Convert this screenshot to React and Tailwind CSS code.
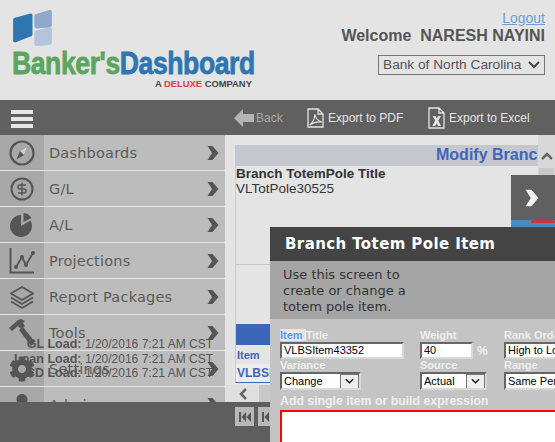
import React from 'react';
import { FaCog, FaUser } from 'react-icons/fa';

const Chevron = ({ className = 'w-[12px] h-[14px] text-[#555]' }) => (
  <svg viewBox="0 0 12 14" className={className}>
    <path d="M0.500 0h5l6 7-6 7h-5l4.500-7z" fill="currentColor" />
  </svg>
);

const CompassIcon = () => (
  <svg viewBox="0 0 26 26" className="w-[26px] h-[26px] text-[#555]">
    <circle cx="13" cy="13" r="11.500" fill="none" stroke="currentColor" strokeWidth="2.200" />
    <path d="M18.500 6.500L15 15l-7.500 4.500L11 11z" fill="currentColor" />
    <path d="M18.500 6.500L11 11l4 4z" fill="#d0d0d0" />
  </svg>
);

const DollarIcon = () => (
  <svg viewBox="0 0 24 24" className="w-[24px] h-[24px] text-[#555]">
    <circle cx="12" cy="12" r="10.500" fill="none" stroke="currentColor" strokeWidth="2" />
    <path d="M16 8H10a2 2 0 0 0 0 4h4a2 2 0 0 1 0 4H8M12 5.500v13" fill="none" stroke="currentColor" strokeWidth="1.500" />
  </svg>
);

const PieIcon = () => (
  <svg viewBox="0 0 24 24" className="w-[24px] h-[24px] text-[#555]">
    <path d="M11 13L20.500 7.500A11 11 0 1 1 11 2z" fill="currentColor" />
    <path d="M13.500 9V0A10 10 0 0 1 21.500 5z" fill="currentColor" />
  </svg>
);

const ChartIcon = () => (
  <svg viewBox="0 0 26 26" className="w-[26px] h-[26px] text-[#555]">
    <path d="M1.500 0v24.500H25" fill="none" stroke="currentColor" strokeWidth="2" />
    <path d="M7 19l6-10 4 8 7-12" fill="none" stroke="currentColor" strokeWidth="1.800" />
    <circle cx="7" cy="19" r="2" fill="currentColor" />
    <circle cx="13" cy="9" r="2" fill="currentColor" />
    <circle cx="17" cy="17" r="2" fill="currentColor" />
    <circle cx="24" cy="5" r="2" fill="currentColor" />
  </svg>
);

const LayersIcon = () => (
  <svg viewBox="0 0 24 24" className="w-[24px] h-[24px] text-[#555]">
    <path d="M12 2L23 8.500 12 15 1 8.500z" fill="none" stroke="currentColor" strokeWidth="1.700" />
    <path d="M1 12.500L12 19l11-6.500M1 16.500L12 23l11-6.500" fill="none" stroke="currentColor" strokeWidth="1.700" />
  </svg>
);

const HammerIcon = () => (
  <svg viewBox="0 0 26 28" className="w-[26px] h-[28px] text-[#555]">
    <path d="M0 9L9 1l3-1 4 2-2 2 2 3-4 3-3-3-6 5z" fill="currentColor" />
    <path d="M10 11l4-3 12 15-4 4z" fill="currentColor" />
  </svg>
);

const MENU = [
  { label: 'Dashboards', icon: <CompassIcon /> },
  { label: 'G/L', icon: <DollarIcon /> },
  { label: 'A/L', icon: <PieIcon /> },
  { label: 'Projections', icon: <ChartIcon /> },
  { label: 'Report Packages', icon: <LayersIcon /> },
  { label: 'Tools', icon: <HammerIcon /> },
  { label: 'Settings', icon: <FaCog className="w-[26px] h-[26px] text-[#555]" /> },
  { label: 'Admin', icon: <FaUser className="w-[22px] h-[22px] text-[#555]" /> },
];

const LOADS = ['GL', 'Loan', 'CD'];

const PdfIcon = () => (
  <svg viewBox="0 0 17 20" className="w-[17px] h-[20px] text-[#e4e4e4]">
    <path d="M1 1h10l5 5v13H1zM11 1v5h5" fill="none" stroke="currentColor" strokeWidth="1.300" />
    <path d="M2.500 17c3-2 5-6 5.500-11 .5 4 3 7 7 8-4-.5-8 0-12.500 3z" fill="none" stroke="currentColor" strokeWidth="1.100" />
  </svg>
);

const ExcelIcon = () => (
  <svg viewBox="0 0 17 22" className="w-[17px] h-[22px] text-[#e4e4e4]">
    <path d="M1 1h10l5 5v15H1zM11 1v5h5" fill="none" stroke="currentColor" strokeWidth="1.300" />
    <path d="M4.500 9h3l1.300 2.500L10 9h3l-2.700 4.500L13 19h-3l-1.300-2.800L7.300 19h-3l2.800-5.500z" fill="currentColor" />
  </svg>
);

const SkipIcon = () => (
  <svg viewBox="0 0 12 10" className="w-[12px] h-[10px] text-[#555]">
    <path d="M0 0h2v10H0zM7 0v10L2.500 5zM12 0v10L7.500 5z" fill="currentColor" />
  </svg>
);

const SelectArrow = () => (
  <div className="ml-auto w-[19px] h-[15px] bg-[#eeeeee] border border-[#777] flex items-center justify-center shrink-0">
    <svg viewBox="0 0 10 6" className="w-[9px] h-[6px]"><path d="M1 1l4 4 4-4" fill="none" stroke="#111" strokeWidth="1.500" /></svg>
  </div>
);

const Field = ({ className, children }) => (
  <div className={`bg-white border-2 border-t-[#666] border-l-[#666] border-r-[#d8d8d8] border-b-[#d8d8d8] flex items-center text-[11px] text-black pl-[2px] whitespace-nowrap overflow-hidden ${className}`}>
    {children}
  </div>
);

const Label = ({ children }) => (
  <div className="text-[11px] font-bold text-[#eeeeee] whitespace-nowrap">{children}</div>
);

export default function App() {
  return (
    <div className="relative w-[555px] h-[442px] overflow-hidden bg-[#e4e4e4] font-['Liberation_Sans',sans-serif]">
      <header className="h-[100px] flex justify-between">
        <div className="pl-[12px] pt-[10px] w-[290px]">
          <svg viewBox="0 0 42 39" className="w-[39px] h-[36px] ml-[1px]">
            <path d="M3 8l15-4c2-.5 3 .5 3 2v20c0 2-1 3-3 3L3 35c-1 0-3 .5-3-2V11c0-2 1-2.500 3-3z" fill="#2f76b0" />
            <path d="M26 4l13-4c2-.5 3 0 3 2v14c0 2-1 3-3 3l-13 1c-2 0-3-1-3-2V7c0-2 1-2.500 3-3z" fill="#8ea9cc" />
            <path d="M26 22l13-3c2 0 3 0 3 2v14c0 2-1 3-3 3l-13 1c-2 0-3-1-3-2V25c0-2 1-2.500 3-3z" fill="#b4c4db" />
          </svg>
          <div className="mt-[1px] h-[32px] leading-[32px] text-[32px] font-bold whitespace-nowrap origin-left scale-x-[0.83] tracking-[-0.5px] [-webkit-text-stroke:0.8px_currentColor]">
            <span className="text-[#5ba65f]">Banker's</span><span className="text-[#2f76b0]">Dashboard</span>
          </div>
          <div className="mt-[-1px] pl-[143px] text-[9.4px] leading-[11px] font-bold text-[#444] whitespace-nowrap">
            A <span className="text-[#d9403f] font-black">DELUXE</span> COMPANY
          </div>
        </div>
        <div className="pr-[10px] pt-[10px] flex flex-col items-end">
          <a className="text-[14px] leading-[16px] text-[#6b9fd6] underline">Logout</a>
          <div className="text-[16px] leading-[19px] font-bold text-[#555] whitespace-pre">Welcome  NARESH NAYINI</div>
          <div className="mt-[10px] w-[167px] h-[20px] border border-[#777] flex items-center pl-[4px] pr-[4px] justify-between text-[13.7px] text-[#555]">
            <span>Bank of North Carolina</span>
            <svg viewBox="0 0 12 8" className="w-[12px] h-[8px]"><path d="M1 1l5 5 5-5" fill="none" stroke="#444" strokeWidth="2" /></svg>
          </div>
        </div>
      </header>

      <div className="h-[35px] bg-[#606060] flex items-center">
        <div className="w-[234px] pl-[11px] pt-[2px] flex flex-col gap-[3px]">
          <div className="w-[22px] h-[4px] bg-[#e8e8e8]" />
          <div className="w-[22px] h-[4px] bg-[#e8e8e8]" />
          <div className="w-[22px] h-[4px] bg-[#e8e8e8]" />
        </div>
        <div className="flex items-center text-[12px] text-[#a8a8a8] w-[73px]">
          <svg viewBox="0 0 20 18" className="w-[20px] h-[18px] mr-[2px]"><path d="M9 0v5h11v8H9v5L0 9z" fill="#b4b4b4" /></svg>
          Back
        </div>
        <div className="flex items-center gap-[4px] text-[12px] text-[#e4e4e4] w-[121px]">
          <PdfIcon />Export to PDF
        </div>
        <div className="flex items-center gap-[4px] text-[12px] text-[#e4e4e4]">
          <ExcelIcon />Export to Excel
        </div>
      </div>

      <div className="h-[267px] flex overflow-hidden">
        <nav className="w-[225px] shrink-0 font-['DejaVu_Sans',sans-serif]">
          {MENU.map((item) => (
            <div key={item.label} className="h-[36px] flex bg-[#bcbcbc] border-b border-[#e4e4e4] box-border">
              <div className="w-[44px] shrink-0 bg-[#a8a8a8] flex items-center justify-center">{item.icon}</div>
              <div className="flex-1 pl-[5px] pt-[2px] flex items-center text-[14.5px] tracking-[0.2px] text-[#5a5a5a] whitespace-nowrap">{item.label}</div>
              <div className="pr-[6px] flex items-center"><Chevron /></div>
            </div>
          ))}
        </nav>

        <main className="flex-1 flex min-w-0">
          <div className="flex-1 min-w-0 pl-[10px] pt-[10px] flex flex-col overflow-hidden">
            <div className="h-[21px] bg-[#c4c7d0] overflow-hidden flex justify-start">
              <div className="ml-[201px] text-[16px] leading-[20px] font-bold text-[#3f66b8] whitespace-nowrap">Modify Branch TotemPole</div>
            </div>
            <div className="h-[99px] border-l border-[#c8c8d4] border-b border-b-[#c8c8c8] text-[13.5px] leading-[15px] text-[#333]">
              <div className="font-bold">Branch TotemPole Title</div>
              <div>VLTotPole30525</div>
            </div>
            <div className="h-[59px] border-l border-[#c8c8d4]" />
            <div className="h-[21px] border-l border-[#c8c8d4] bg-[#3c66b8] shrink-0" />
            <div className="h-[19px] border-l border-[#c8c8d4] pl-[1px] pt-[1px] text-[11px] leading-[19px] font-bold text-[#3f66b8] shrink-0">Item</div>
            <div className="h-[19px] border-l border-[#c8c8d4] bg-[#ececec] border-b border-b-[#3f66b8] pl-[1px] text-[12px] leading-[18px] font-bold text-[#3f66b8] shrink-0 whitespace-nowrap">VLBSItem43352</div>
          </div>
          <div className="w-[17px] shrink-0 bg-[#d8d8d8] flex flex-col items-center pt-[17px]">
            <svg viewBox="0 0 12 8" className="w-[12px] h-[8px]"><path d="M1 7l5-5 5 5" fill="none" stroke="#666" strokeWidth="2.500" /></svg>
            <div className="mt-[8px] w-[15px] flex-1 bg-[#c8c8c8]" />
          </div>
        </main>
      </div>

      <footer className="h-[40px] bg-[#5e5e5e] flex gap-[4px] pl-[235px] pt-[5px]">
        <div className="w-[19px] h-[19px] bg-[#b8b8b8] flex items-center justify-center"><SkipIcon /></div>
        <div className="w-[19px] h-[19px] bg-[#b8b8b8] flex items-center justify-center"><SkipIcon /></div>
      </footer>

      {/* bottom horizontal scroller sits over the table */}
      <div className="absolute left-[225px] top-[385px] w-[45px] h-[17px] bg-[#e0e0e0] flex items-center">
        <svg viewBox="0 0 8 12" className="ml-[14px] w-[8px] h-[12px]"><path d="M7 1L2 6l5 5" fill="none" stroke="#666" strokeWidth="2.500" /></svg>
        <div className="ml-[12px] flex-1 h-full bg-[#c8c8c8]" />
      </div>

      {/* load times overlap the menu in the original too */}
      <div className="absolute left-[0px] top-[337px] w-[213px] text-[12px] leading-[14.500px] text-[#555]">
        {LOADS.map((name) => (
          <div key={name} className="flex justify-end whitespace-pre">
            <span className="font-bold text-[12.500px]">{name} Load: </span>1/20/2016 7:21 AM CST
          </div>
        ))}
      </div>

      <div className="absolute left-[511px] top-[175px] w-[44px] h-[52px] bg-[#4f88b4]">
        <div className="h-[45px] bg-[#606060] flex items-center justify-center pr-[2px]">
          <Chevron className="w-[14px] h-[20px] text-[#f0f0f0]" />
        </div>
        <div className="ml-[20px] h-[3px] bg-[#c8363a] rounded-t-full" />
      </div>

      <section className="absolute left-[270px] top-[227px] w-[285px] h-[215px] flex flex-col">
        <div className="h-[34px] bg-[#444444] pl-[15px] pt-[1px] flex items-center text-[15px] font-bold text-white font-['DejaVu_Sans',sans-serif] whitespace-nowrap tracking-[0.4px]">
          Branch Totem Pole Item
        </div>
        <div className="h-[58px] bg-[#a5a5a5] pl-[13px] pt-[6px] text-[13px] leading-[16px] text-[#333] font-['DejaVu_Sans',sans-serif]">
          Use this screen to<br />create or change a<br />totem pole item.
        </div>
        <div className="flex-1 bg-[#c4c4c4] pl-[10px] pt-[9px] overflow-hidden">
          <div className="flex">
            <div className="w-[140px]">
              <div className="h-[14px] leading-[14px]"><Label><span className="bg-[#e8e8e8] text-[#4d9dff]">Item </span>Title</Label></div>
              <Field className="w-[124px] h-[17px]">VLBSItem43352</Field>
              <div className="h-[13px] leading-[13px]"><Label>Variance</Label></div>
              <Field className="w-[81px] h-[18px]">Change<SelectArrow /></Field>
            </div>
            <div className="w-[84px]">
              <div className="h-[14px] leading-[14px]"><Label>Weight</Label></div>
              <div className="flex items-center h-[17px]">
                <Field className="w-[53px] h-[17px]">40</Field>
                <span className="ml-[4px] text-[12px] leading-[14px] font-bold text-[#eeeeee]">%</span>
              </div>
              <div className="h-[13px] leading-[13px]"><Label>Source</Label></div>
              <Field className="w-[67px] h-[18px]">Actual<SelectArrow /></Field>
            </div>
            <div className="flex-1 min-w-0">
              <div className="h-[14px] leading-[14px]"><Label>Rank Order</Label></div>
              <Field className="w-[80px] h-[17px]">High to Low</Field>
              <div className="h-[13px] leading-[13px]"><Label>Range</Label></div>
              <Field className="w-[80px] h-[18px]">Same Period</Field>
            </div>
          </div>
          <div className="mt-[4px] h-[14px] leading-[14px] text-[12.300px] font-bold text-[#eeeeee] whitespace-nowrap">Add single item or build expression</div>
          <div className="mt-[2px] h-[60px] bg-white border-2 border-[#ff0000] border-r-0" />
        </div>
      </section>
    </div>
  );
}
